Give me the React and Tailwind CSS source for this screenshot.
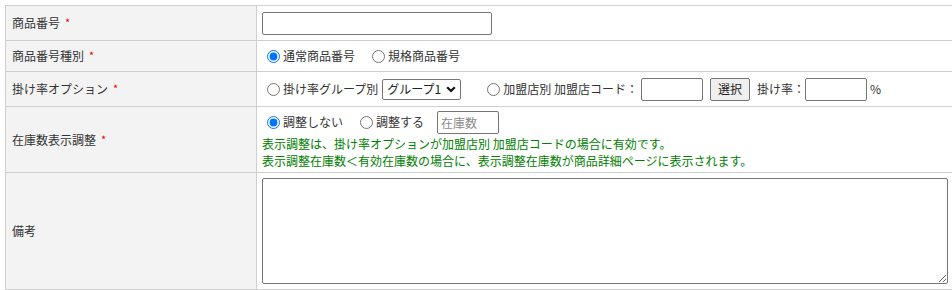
import React from "react";

const Req = () => <span className="ml-[5px] text-[11px] text-[#ee0000] align-top">*</span>;

function Radio({ name, checked, children, className = "" }) {
  return (
    <label className={"flex items-center " + className}>
      <input
        type="radio"
        name={name}
        defaultChecked={checked}
        className="ml-[5px] mr-[3px] w-[13px] h-[13px] m-0"
      />
      <span>{children}</span>
    </label>
  );
}

const inputCls =
  "h-[23px] border border-[#767676] rounded-[2px] bg-white px-[3px] text-[12px] outline-none";

export default function App() {
  return (
    <div
      className="pt-[5px] pl-[5px] bg-white text-[#333] text-[12px] overflow-hidden h-[290px]"
      style={{ fontFamily: '"Noto Sans CJK JP", "Noto Sans", sans-serif' }}
    >
      <table className="w-[960px] border-collapse">
        <tbody>
          <tr>
            <th className="h-[35px] w-[251px] bg-[#f2f3f2] border border-[#cfcfcf] pl-[6px] text-left font-normal">
              商品番号<Req />
            </th>
            <td className="h-[35px] border border-[#cfcfcf] px-[5px]">
              <input type="text" className={inputCls + " w-[230px] block"} />
            </td>
          </tr>
          <tr>
            <th className="h-[31px] bg-[#f2f3f2] border border-[#cfcfcf] pl-[6px] text-left font-normal">
              商品番号種別<Req />
            </th>
            <td className="h-[31px] border border-[#cfcfcf] px-[5px]">
              <div className="flex items-center">
                <Radio name="kind" checked className="mr-[12px]">通常商品番号</Radio>
                <Radio name="kind">規格商品番号</Radio>
              </div>
            </td>
          </tr>
          <tr>
            <th className="h-[35px] bg-[#f2f3f2] border border-[#cfcfcf] pl-[6px] text-left font-normal">
              掛け率オプション<Req />
            </th>
            <td className="h-[35px] border border-[#cfcfcf] px-[5px]">
              <div className="flex items-center">
                <Radio name="rate">掛け率グループ別</Radio>
                <div className="relative ml-[4px] mr-[21px]">
                  <select className="appearance-none h-[21px] w-[79px] border border-[#767676] rounded-[2px] bg-white pl-[4px] text-[12px] text-[#222] outline-none">
                    <option>グループ1</option>
                  </select>
                  <svg
                    className="absolute right-[5px] top-[7px] w-[10px] h-[7px] pointer-events-none"
                    viewBox="0 0 10 7"
                  >
                    <polyline points="1.2,1.2 5,5 8.8,1.2" fill="none" stroke="#111" strokeWidth="2.2" />
                  </svg>
                </div>
                <Radio name="rate">加盟店別 加盟店コード：</Radio>
                <input type="text" className={inputCls + " w-[62px] ml-[3px]"} />
                <button className="ml-[7px] h-[23px] w-[40px] border border-[#767676] rounded-[2px] bg-[#efefef] text-[12px] text-[#222]">
                  選択
                </button>
                <span className="ml-[7px]">掛け率：</span>
                <input type="text" className={inputCls + " w-[62px]"} />
                <span className="ml-[3px]">%</span>
              </div>
            </td>
          </tr>
          <tr>
            <th className="h-[66px] bg-[#f2f3f2] border border-[#cfcfcf] pl-[6px] text-left font-normal">
              在庫数表示調整<Req />
            </th>
            <td className="h-[66px] border border-[#cfcfcf] px-[5px]">
              <div className="flex items-center">
                <Radio name="stock" checked className="mr-[12px]">調整しない</Radio>
                <Radio name="stock">調整する</Radio>
                <input
                  type="text"
                  placeholder="在庫数"
                  className={inputCls + " w-[62px] ml-[13px] placeholder:text-[#8a8a8a]"}
                />
              </div>
              <div className="text-[#008000] leading-[17px] mt-[1px]">
                <div>表示調整は、掛け率オプションが加盟店別 加盟店コードの場合に有効です。</div>
                <div>表示調整在庫数＜有効在庫数の場合に、表示調整在庫数が商品詳細ページに表示されます。</div>
              </div>
            </td>
          </tr>
          <tr>
            <th className="h-[117px] bg-[#f2f3f2] border border-[#cfcfcf] pl-[6px] text-left font-normal">
              備考
            </th>
            <td className="h-[117px] border border-[#cfcfcf] px-[5px]">
              <textarea className="block w-[686px] h-[106px] border border-[#767676] rounded-[2px] bg-white resize outline-none" />
            </td>
          </tr>
        </tbody>
      </table>
    </div>
  );
}
